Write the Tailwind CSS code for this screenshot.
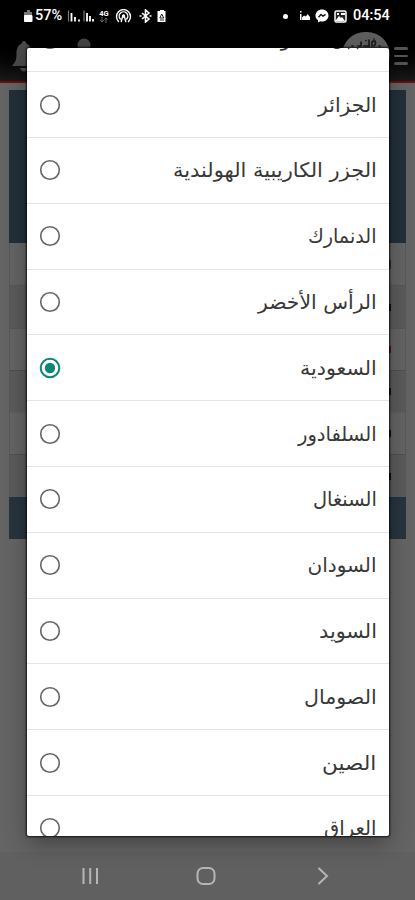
<!DOCTYPE html>
<html lang="ar">
<head>
<meta charset="utf-8">
<title>اختيار الدولة</title>
<script src="https://cdn.jsdelivr.net/npm/@tailwindcss/browser@4"></script>
</head>
<body class="bg-[#646464] font-['Roboto','DejaVu_Sans',sans-serif]">
<div class="relative w-[415px] h-[900px] overflow-hidden flex flex-col bg-[#646464]">
  <!-- status bar -->
  <div class="h-8 shrink-0 bg-black text-white flex items-center justify-between pl-[23px] pr-[24px]">
    <div class="flex items-center h-full">
      <svg width="11" height="14" viewBox="0 0 11 14"><path d="M4 1h3v2h2v4H1V3h3z" fill="#777"/><rect x="1" y="6" width="8.500" height="7" rx="1" fill="#fff"/></svg>
      <span class="text-[14.500px] font-medium leading-none w-[30px] whitespace-nowrap ml-px">57%</span>
      <svg class="ml-[2px]" width="29" height="14" viewBox="0 0 29 14"><g stroke="#777" stroke-width="1.200"><path d="M1.500 1.500v11M17 1.500v11"/></g><g stroke="#fff" stroke-width="1.800"><path d="M4.500 4v8.500M8 8v4.500M12 10.500v2M20 4v8.500M23 7v5.500M26 10v2.500"/></g></svg>
      <span class="flex flex-col items-center w-[12px] ml-[2px] leading-none"><span class="text-[7.500px] leading-[7px] font-bold">4G</span><svg width="8" height="6" viewBox="0 0 8 6"><path d="M2 0v5M0 3l2 2 2-2M6 6V1M4.500 2.500L6 1l1.500 1.500" stroke="#666" fill="none"/></svg></span>
      <svg class="ml-[5px]" width="17" height="14" viewBox="0 0 17 14" fill="none" stroke="#fff" stroke-width="1.400" stroke-linecap="round"><path d="M3.500 12.500a7 7 0 1 1 10 0M5.300 10a4.300 4.300 0 1 1 6.400 0M7.500 8l-1.300 4.500M9.500 8l1.300 4.500"/><circle cx="8.500" cy="7" r="1" fill="#fff"/></svg>
      <svg class="ml-[7px]" width="13" height="14" viewBox="0 0 13 14" fill="none" stroke="#fff" stroke-width="1.600"><path d="M3 4l7 6-3.500 3V1L10 4l-7 6"/><path d="M.5 7h2M10.500 7h2"/></svg>
      <svg class="ml-[5px]" width="10" height="14" viewBox="0 0 10 14"><path d="M3 1h4v1h1.500v11h-8V2H3z" fill="#fff"/><path d="M2.800 9l2-4 2 4zM3 11h4" stroke="#222" fill="none"/></svg>
    </div>
    <div class="flex items-center h-full">
      <span class="w-[5px] h-[5px] rounded-full bg-white"></span>
      <svg class="ml-[11px]" width="12" height="12" viewBox="0 0 12 12" fill="#fff"><path d="M1 1h1.500v1.500H1zM1 4h1.500v6H1zM3 7.500l2-2 2 1L8.500 4 11 7v3H3z"/></svg>
      <svg class="ml-[4px]" width="14" height="14" viewBox="0 0 14 14"><path d="M7 .5C3.200.5.500 3.200.500 6.500c0 2 .9 3.600 2.500 4.700v2.300l2.200-1.200c4.800 1.200 8.300-2 8.300-5.800 0-3.300-2.700-6-6.500-6z" fill="#fff"/><path d="M3.500 8.300L6 5.500l2 1.700 2.600-1.800" stroke="#111" stroke-width="1.400" fill="none"/></svg>
      <svg class="ml-[5px]" width="13" height="13" viewBox="0 0 13 13"><rect x="1" y="1" width="11" height="11" rx="1.500" fill="#222" stroke="#fff" stroke-width="1.500"/><path d="M2 10l3-4 2 2 1-1 3 4H2zM3 3h2v2H3zM7 3h4v2H7z" fill="#fff"/></svg>
      <span class="text-[14.500px] font-medium leading-none w-[38px] whitespace-nowrap ml-[6px]">04:54</span>
    </div>
  </div>

  <!-- dimmed application -->
  <div class="h-[49px] shrink-0 bg-gradient-to-b from-black to-[#191919] flex justify-between items-start pl-[11px] pr-[7px]">
    <div class="flex">
      <svg class="mt-[9px]" width="26" height="31" viewBox="0 0 26 31" fill="#4b4b4b"><path d="M13 0c1.500 0 2.200 1 2.200 2.500C19 4 20.500 8 20.500 12c0 7 1 9 4.500 13H1c3.500-4 4.500-6 4.500-13 0-4 1.500-8 5.300-9.500C10.800 1 11.500 0 13 0zM9 27h8c-1 4.500-7 4.500-8 0z"/></svg>
      <svg class="mt-[6px] ml-[34px]" width="26" height="31" viewBox="0 0 26 31" fill="#444"><circle cx="13" cy="7" r="6.500"/><path d="M2 28c0-18 22-18 22 0z"/></svg>
    </div>
    <div class="flex items-start">
      <div class="w-[48px] h-[46px] rounded-full bg-[#5e5e5e] overflow-hidden mr-[4px]">
        <svg width="48" height="20" viewBox="0 0 48 20" fill="none" stroke="#1a1a1a" stroke-width="1.700" stroke-linecap="round"><path d="M16 14h3v-4M22 14h5V8M30 14v-4c3-3 5 1 2 4M37 14h1M10 14h1M24 8.500h.1M32 7h.1"/></svg>
      </div>
      <div class="mt-[15px] flex flex-col gap-[5px] w-[14px]"><i class="block h-[2.500px] rounded bg-[#555]"></i><i class="block h-[2.500px] rounded bg-[#555]"></i><i class="block h-[2.500px] rounded bg-[#555]"></i></div>
    </div>
  </div>
  <div class="h-[2px] shrink-0 bg-[#6e0b0e]"></div>
  <div class="h-[769px] shrink-0 px-[9px] pt-[7px] bg-[#646464]">
    <div class="h-[153px] bg-[#22303a]"></div>
    <div class="border-x border-[#585858] text-black">
      <div class="h-[43px] bg-[#646464] border-b border-[#575757] flex items-center justify-end pr-[14px]"><i class="w-[3px] h-[9px] bg-[#333]"></i></div>
      <div class="h-[43px] bg-[#5b5b5b] border-b border-[#575757] flex items-center justify-end pr-[14px]"><i class="w-[3px] h-[7px] bg-[#111]"></i></div>
      <div class="h-[42px] bg-[#646464] border-b border-[#505050] flex items-center justify-end pr-[14px]"><i class="w-[3px] h-[7px] bg-[#6a1010]"></i></div>
      <div class="h-[42px] bg-[#5b5b5b] border-b border-[#606060] flex items-center justify-end pr-[14px]"><i class="w-[3px] h-[7px] bg-[#111]"></i></div>
      <div class="h-[42px] bg-[#646464] border-b border-[#505050] flex items-center justify-end pr-[14px]"><i class="w-[3px] h-[7px] bg-[#111]"></i></div>
      <div class="h-[42px] bg-[#5b5b5b] flex items-center justify-end pr-[14px]"><i class="w-[3px] h-[7px] bg-[#111]"></i></div>
    </div>
    <div class="h-[42px] bg-[#27343e]"></div>
  </div>

  <!-- navigation bar -->
  <div class="h-[48px] shrink-0 bg-[#606060] flex items-center justify-between pl-[81px] pr-[84px]">
    <svg width="18" height="18" viewBox="0 0 18 18" stroke="#b5b5b5" stroke-width="2"><path d="M2.500 1v16M9.200 1v16M16 1v16"/></svg>
    <svg width="20" height="18" viewBox="0 0 20 18" fill="none" stroke="#b5b5b5" stroke-width="2"><rect x="1.500" y="1" width="17" height="16" rx="5.500"/></svg>
    <svg width="18" height="18" viewBox="0 0 18 18" fill="none" stroke="#b5b5b5" stroke-width="2"><path d="M5.500 1l8.500 8-8.500 8"/></svg>
  </div>

  <!-- country picker -->
  <div class="absolute left-[27px] top-[48px] w-[361.500px] h-[787.500px] rounded-[2px] bg-white overflow-hidden shadow-[0_0_2px_1px_rgba(0,0,0,.75),0_8px_22px_rgba(0,0,0,.32)]">
    <div id="list" class="-mt-[41.600px] flex flex-col" role="radiogroup"></div>
  </div>
</div>
<script>
  const countries = [
    ['الجبل الأسود', 104], ['الجزائر', 59], ['الجزر الكاريبية الهولندية', 204], ['الدنمارك', 69],
    ['الرأس الأخضر', 119], ['السعودية', 77], ['السلفادور', 79], ['السنغال', 64], ['السودان', 69],
    ['السويد', 58], ['الصومال', 73], ['الصين', 54], ['العراق', 52]
  ];
  const list = document.getElementById('list');
  countries.forEach(([name], i) => {
    const on = i === 5;
    const row = document.createElement('div');
    row.className = 'h-[65.8px] shrink-0 flex items-center justify-between pl-[12px] pr-[12px] border-b-[1.5px] border-[#e4e4e4]';
    row.innerHTML = `<svg width="22" height="22" viewBox="0 0 22 22" fill="none"><circle cx="11" cy="11" r="9.300" stroke="${on ? '#0d8577' : '#656565'}" stroke-width="${on ? 2 : 1.6}"/>${on ? '<circle cx="11" cy="11" r="5.200" fill="#0d8577"/>' : ''}</svg><span dir="rtl" class="block origin-right whitespace-nowrap text-[20px] leading-[24px] text-[#383838] font-['DejaVu_Sans',sans-serif]">${name}</span>`;
    list.append(row);
  });
  const fit = () => [...list.children].forEach((row, i) => {
    const label = row.lastElementChild;
    label.style.transform = `scaleX(${countries[i][1] / label.offsetWidth})`;
  });
  fit();
  addEventListener('load', fit);
  document.fonts.ready.then(fit);
  new ResizeObserver(fit).observe(list.children[2].lastElementChild);
</script>
</body>
</html>
